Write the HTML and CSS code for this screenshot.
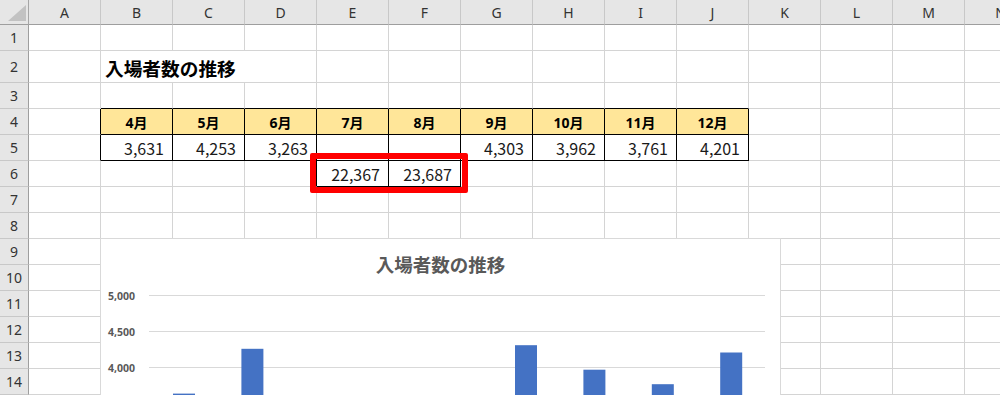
FILE: index.html
```html
<!DOCTYPE html>
<html lang="ja">
<head>
<meta charset="utf-8">
<title>入場者数の推移</title>
<link rel="stylesheet" href="styles.css">
</head>
<body>
<div class="sheet">
  <div class="row hdr">
    <div class="corner"><svg width="28" height="24" viewBox="0 0 28 24"><polygon points="26,5 26,21 8,21" fill="#c2c2c2"/></svg></div>
    <div class="ch">A</div><div class="ch">B</div><div class="ch">C</div><div class="ch">D</div><div class="ch">E</div><div class="ch">F</div><div class="ch">G</div><div class="ch">H</div><div class="ch">I</div><div class="ch">J</div><div class="ch">K</div><div class="ch">L</div><div class="ch">M</div><div class="ch">N</div>
  </div>
  <div class="row"><div class="rh">1</div><div class="c"></div><div class="c"></div><div class="c"></div><div class="c"></div><div class="c"></div><div class="c"></div><div class="c"></div><div class="c"></div><div class="c"></div><div class="c"></div><div class="c"></div><div class="c"></div><div class="c"></div><div class="c"></div></div>
  <div class="row tall"><div class="rh">2</div><div class="c"></div><div class="c w3 title">入場者数の推移</div><div class="c"></div><div class="c"></div><div class="c"></div><div class="c"></div><div class="c"></div><div class="c"></div><div class="c"></div><div class="c"></div><div class="c"></div><div class="c"></div></div>
  <div class="row"><div class="rh">3</div><div class="c"></div><div class="c kb"></div><div class="c kb"></div><div class="c kb"></div><div class="c kb"></div><div class="c kb"></div><div class="c kb"></div><div class="c kb"></div><div class="c kb"></div><div class="c kb"></div><div class="c"></div><div class="c"></div><div class="c"></div><div class="c"></div></div>
  <div class="row"><div class="rh">4</div><div class="c kr"></div><div class="c kr kb mh">4月</div><div class="c kr kb mh">5月</div><div class="c kr kb mh">6月</div><div class="c kr kb mh">7月</div><div class="c kr kb mh">8月</div><div class="c kr kb mh">9月</div><div class="c kr kb mh">10月</div><div class="c kr kb mh">11月</div><div class="c kr kb mh">12月</div><div class="c"></div><div class="c"></div><div class="c"></div><div class="c"></div></div>
  <div class="row"><div class="rh">5</div><div class="c kr"></div><div class="c kr kb num">3,631</div><div class="c kr kb num">4,253</div><div class="c kr kb num">3,263</div><div class="c kr kb num"></div><div class="c kr kb num"></div><div class="c kr kb num">4,303</div><div class="c kr kb num">3,962</div><div class="c kr kb num">3,761</div><div class="c kr kb num">4,201</div><div class="c"></div><div class="c"></div><div class="c"></div><div class="c"></div></div>
  <div class="row"><div class="rh">6</div><div class="c"></div><div class="c"></div><div class="c"></div><div class="c kr"></div><div class="c kr kb num">22,367</div><div class="c kr kb num">23,687</div><div class="c"></div><div class="c"></div><div class="c"></div><div class="c"></div><div class="c"></div><div class="c"></div><div class="c"></div><div class="c"></div></div>
  <div class="row"><div class="rh">7</div><div class="c"></div><div class="c"></div><div class="c"></div><div class="c"></div><div class="c"></div><div class="c"></div><div class="c"></div><div class="c"></div><div class="c"></div><div class="c"></div><div class="c"></div><div class="c"></div><div class="c"></div><div class="c"></div></div>
  <div class="row"><div class="rh">8</div><div class="c"></div><div class="c"></div><div class="c"></div><div class="c"></div><div class="c"></div><div class="c"></div><div class="c"></div><div class="c"></div><div class="c"></div><div class="c"></div><div class="c"></div><div class="c"></div><div class="c"></div><div class="c"></div></div>
  <div class="row"><div class="rh">9</div><div class="c"></div><div class="c"></div><div class="c"></div><div class="c"></div><div class="c"></div><div class="c"></div><div class="c"></div><div class="c"></div><div class="c"></div><div class="c"></div><div class="c"></div><div class="c"></div><div class="c"></div><div class="c"></div></div>
  <div class="row"><div class="rh">10</div><div class="c"></div><div class="c"></div><div class="c"></div><div class="c"></div><div class="c"></div><div class="c"></div><div class="c"></div><div class="c"></div><div class="c"></div><div class="c"></div><div class="c"></div><div class="c"></div><div class="c"></div><div class="c"></div></div>
  <div class="row"><div class="rh">11</div><div class="c"></div><div class="c"></div><div class="c"></div><div class="c"></div><div class="c"></div><div class="c"></div><div class="c"></div><div class="c"></div><div class="c"></div><div class="c"></div><div class="c"></div><div class="c"></div><div class="c"></div><div class="c"></div></div>
  <div class="row"><div class="rh">12</div><div class="c"></div><div class="c"></div><div class="c"></div><div class="c"></div><div class="c"></div><div class="c"></div><div class="c"></div><div class="c"></div><div class="c"></div><div class="c"></div><div class="c"></div><div class="c"></div><div class="c"></div><div class="c"></div></div>
  <div class="row"><div class="rh">13</div><div class="c"></div><div class="c"></div><div class="c"></div><div class="c"></div><div class="c"></div><div class="c"></div><div class="c"></div><div class="c"></div><div class="c"></div><div class="c"></div><div class="c"></div><div class="c"></div><div class="c"></div><div class="c"></div></div>
  <div class="row"><div class="rh">14</div><div class="c"></div><div class="c"></div><div class="c"></div><div class="c"></div><div class="c"></div><div class="c"></div><div class="c"></div><div class="c"></div><div class="c"></div><div class="c"></div><div class="c"></div><div class="c"></div><div class="c"></div><div class="c"></div></div>

  <div class="redbox"></div>

  <div class="chart">
    <div class="chart-title">入場者数の推移</div>
    <svg class="plot" width="679" height="140" viewBox="0 0 679 140">
      <g stroke="#d9d9d9" stroke-width="1">
        <line x1="48" y1="19.5" x2="664" y2="19.5"/>
        <line x1="48" y1="55.5" x2="664" y2="55.5"/>
        <line x1="48" y1="91.5" x2="664" y2="91.5"/>
      </g>
      <g class="axis" text-anchor="end">
        <text x="34" y="23.5">5,000</text>
        <text x="34" y="59.5">4,500</text>
        <text x="34" y="95.5">4,000</text>
      </g>
      <g fill="#4472c4">
        <rect x="72" y="117.6" width="22" height="30"/>
        <rect x="140.4" y="72.8" width="22" height="70"/>
        <rect x="414" y="69.2" width="22" height="75"/>
        <rect x="482.4" y="93.7" width="22" height="50"/>
        <rect x="550.8" y="108.2" width="22" height="40"/>
        <rect x="619.2" y="76.5" width="22" height="70"/>
      </g>
    </svg>
  </div>
</div>
</body>
</html>
```

FILE: styles.css
```css
html, body {
  margin: 0;
  padding: 0;
  background: #ffffff;
  overflow: hidden;
}

.sheet {
  position: relative;
  width: 1000px;
  height: 395px;
  overflow: hidden;
  font-family: "Noto Sans", "Noto Sans CJK JP", sans-serif;
  color: #000;
}

.row {
  display: flex;
  height: 26px;
  width: 1100px;
}

.row.tall {
  height: 32px;
}

.row.hdr {
  height: 25px;
}

.corner {
  flex: none;
  width: 29px;
  box-sizing: border-box;
  background: #e6e6e6;
  border-right: 1px solid #a6a6a6;
  border-bottom: 1px solid #9e9e9e;
  display: flex;
}

.ch {
  flex: none;
  width: 72px;
  box-sizing: border-box;
  background: #e6e6e6;
  border-right: 1px solid #c8c8c8;
  border-bottom: 1px solid #9e9e9e;
  display: flex;
  align-items: center;
  justify-content: center;
  font-size: 14px;
  color: #333;
}

.rh {
  flex: none;
  width: 29px;
  box-sizing: border-box;
  background: #e6e6e6;
  border-right: 1px solid #9e9e9e;
  border-bottom: 1px solid #c8c8c8;
  display: flex;
  align-items: center;
  justify-content: center;
  font-size: 14px;
  color: #333;
}

.c {
  flex: none;
  width: 72px;
  box-sizing: border-box;
  border-right: 1px solid #d4d4d4;
  border-bottom: 1px solid #d4d4d4;
  display: flex;
  align-items: center;
  font-size: 14.5px;
  white-space: nowrap;
}

.c.w3 {
  width: 216px;
}

.c.kb {
  border-bottom-color: #000;
}

.c.kr {
  border-right-color: #000;
}

.c.title {
  align-items: flex-end;
  padding-left: 4px;
  font-size: 18.7px;
  font-weight: 700;
  line-height: 24px;
  padding-bottom: 1px;
}

.c.mh {
  background: #ffe699;
  justify-content: center;
  font-weight: 700;
  font-size: 14px;
}

.c.num {
  justify-content: flex-end;
  padding-right: 8px;
  font-family: "Noto Sans CJK JP", sans-serif;
  font-size: 16px;
  font-weight: 400;
  color: #1a1a1a;
}

.redbox {
  position: absolute;
  left: 310px;
  top: 153px;
  width: 158px;
  height: 40px;
  box-sizing: border-box;
  border: 6px solid #ff0000;
  border-radius: 2px;
}

.chart {
  position: absolute;
  left: 100px;
  top: 238px;
  width: 681px;
  height: 180px;
  box-sizing: border-box;
  background: #fff;
  border: 1px solid #d9d9d9;
}

.chart-title {
  padding-top: 13px;
  height: 24px;
  line-height: 24px;
  text-align: center;
  font-family: "Noto Sans CJK JP", sans-serif;
  font-size: 18.5px;
  font-weight: 700;
  color: #595959;
}

.plot {
  display: block;
}

.axis text {
  font-family: "Noto Sans", sans-serif;
  font-size: 10.5px;
  font-weight: 700;
  fill: #595959;
}
```
